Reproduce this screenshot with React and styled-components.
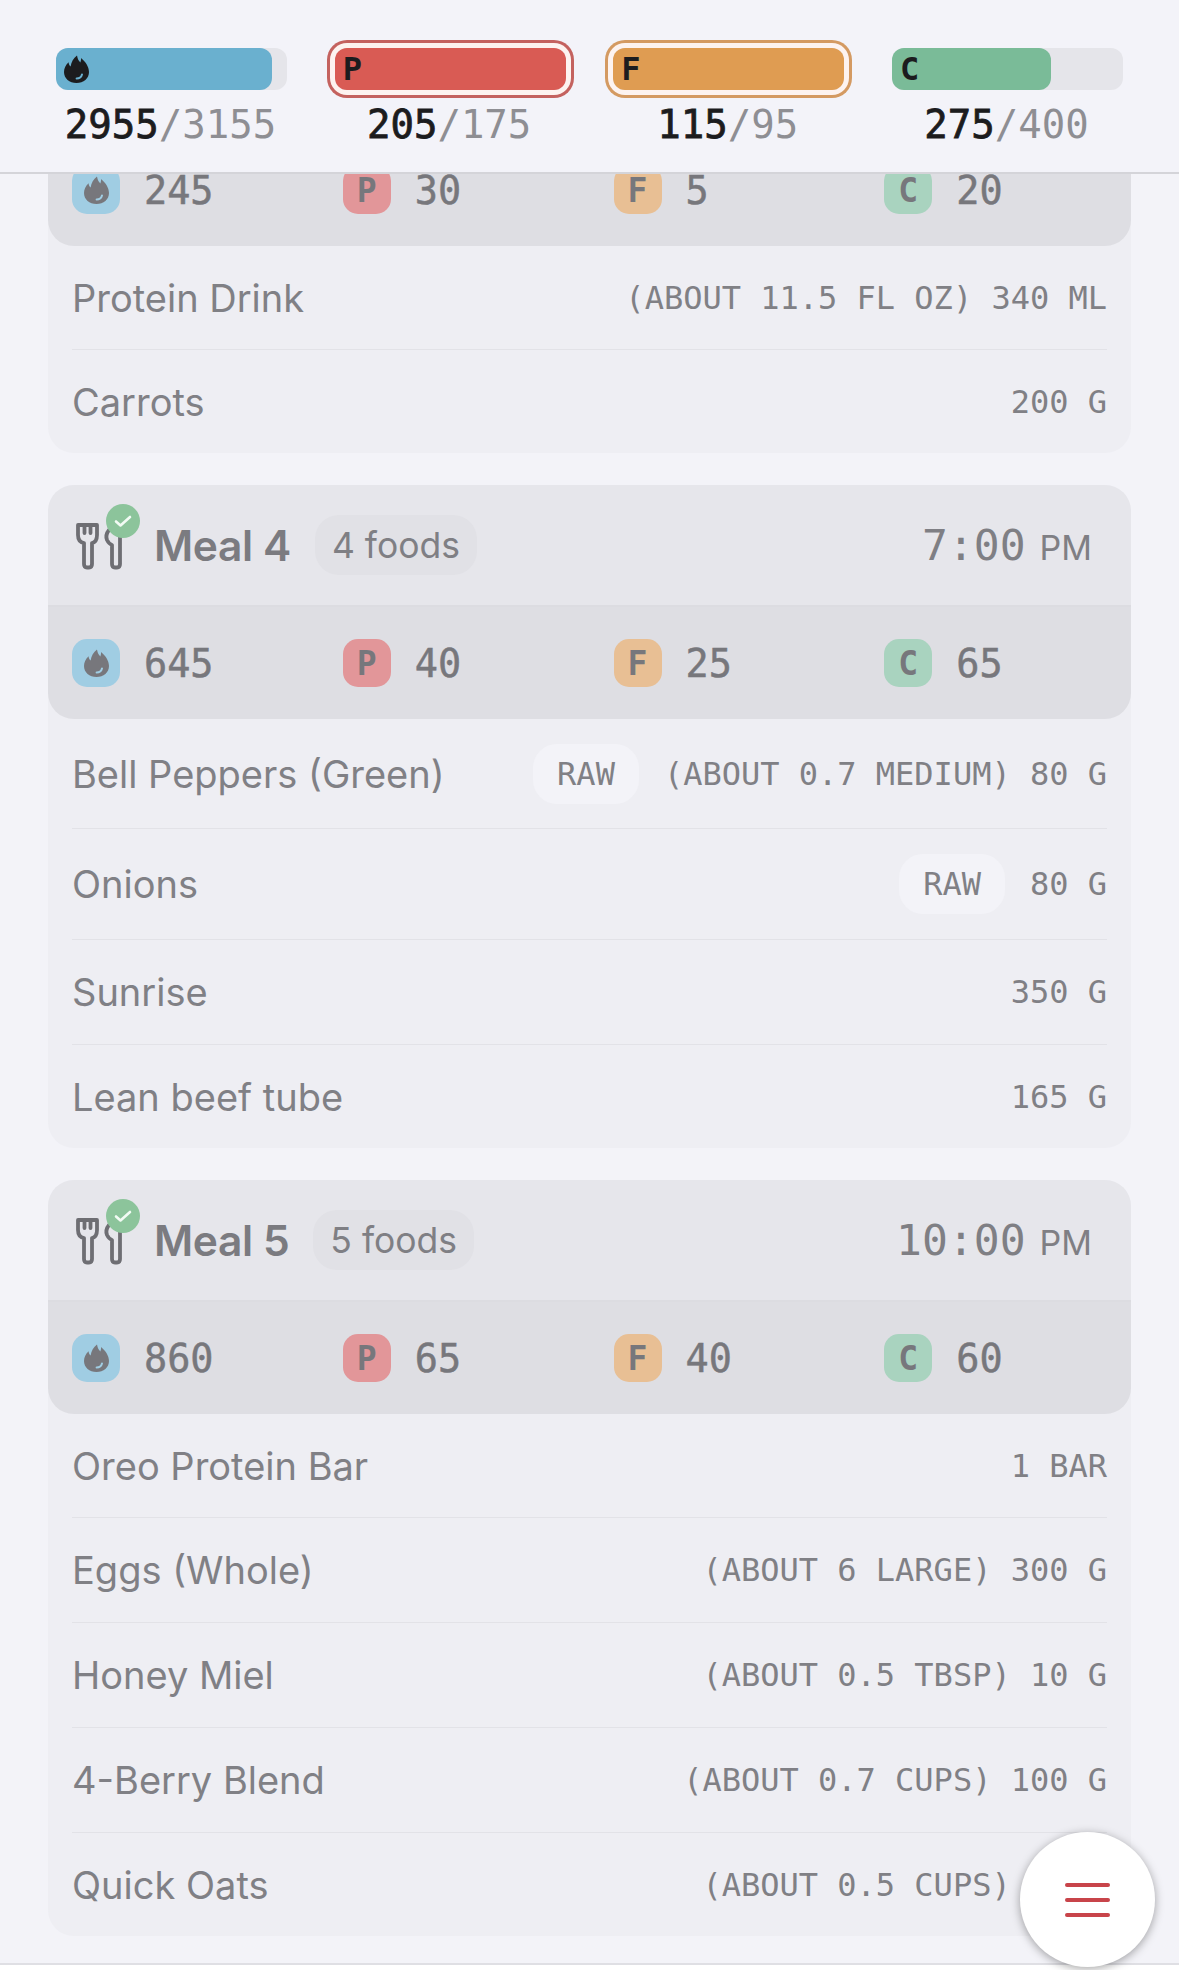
import styled, { createGlobalStyle } from 'styled-components'

const mono = `"DejaVu Sans Mono", "Liberation Mono", monospace`
const sans = `Inter, "Noto Sans", sans-serif`

const GlobalStyle = createGlobalStyle`
html, body {
  margin: 0;
  padding: 0;
  background: #fff;
}
* {
  box-sizing: border-box;
}
`

const Page = styled.div`
position: relative;
width: 1179px;
height: 1970px;
display: flex;
flex-direction: column;
overflow: hidden;
background: #fff;
`
const TopBar = styled.header`
height: 174px;
flex: none;
padding: 48px 56px 0;
display: grid;
grid-template-columns: repeat(4, 231px);
justify-content: space-between;
background: #f3f3f9;
border-bottom: 2px solid #d4d4d9;
`
const Macro = styled.div`
display: flex;
flex-direction: column;
align-items: center;
`
const Track = styled.div`
width: 100%;
height: 42px;
border-radius: 12px;
background: #e5e5ea;
box-shadow: ${(p) => (p.$over ? `0 0 0 5px #fdf3f0, 0 0 0 8px ${p.$ring}` : 'none')};
`
const Fill = styled.div`
height: 100%;
display: flex;
align-items: center;
padding-left: 8px;
border-radius: 12px;
background: ${(p) => p.$color};
color: #1c1c1e;
font: 700 32px ${mono};
`
const Totals = styled.div`
margin: 13px 2px 0 0;
font-family: ${mono};
font-size: 39px;
line-height: 44px;
color: #8e8e93;
white-space: nowrap;
`
const Eaten = styled.span`
color: #1c1c1e;
-webkit-text-stroke: 0.8px #1c1c1e;
`
const Scroller = styled.main`
flex: 1;
min-height: 0;
overflow: hidden;
padding: 0 48px;
background: #f3f3f8;
`
const Meals = styled.div`
margin-top: -40px;
display: flex;
flex-direction: column;
gap: 32px;
`
const Card = styled.section`
border-radius: 26px;
overflow: hidden;
background: #eeeef3;
`
const MealHeader = styled.div`
height: 122px;
display: flex;
align-items: center;
padding: 0 39px 0 28px;
background: #e6e6eb;
border-bottom: 2px solid #dcdce1;
`
const IconWrap = styled.div`
position: relative;
width: 51px;
height: 48px;
flex: none;
margin-top: 2px;
color: #6e6e73;
`
const Done = styled.div`
position: absolute;
top: -18px;
left: 30px;
width: 34px;
height: 34px;
display: flex;
align-items: center;
justify-content: center;
border-radius: 50%;
background: #8cc49b;
color: #f2fbf4;
`
const MealTitle = styled.h2`
margin: 0 0 0 27px;
font: 600 42.5px ${sans};
letter-spacing: -0.4px;
color: #7b7b80;
`
const FoodCount = styled.span`
margin-left: 24px;
height: 60px;
display: flex;
align-items: center;
padding: 0 17px;
border-radius: 24px;
background: #e1e1e6;
font: 400 35.5px ${sans};
color: #7f7f84;
`
const MealTime = styled.div`
margin-left: auto;
display: flex;
align-items: baseline;
gap: 14px;
font: 400 43px ${mono};
color: #7f7f84;
`
const Meridiem = styled.span`
font: 400 34px ${sans};
`
const StatsRow = styled.div`
height: 112px;
display: grid;
grid-template-columns: repeat(4, 1fr);
border-radius: 0 0 26px 26px;
background: #dedee3;
`
const Stat = styled.div`
display: flex;
align-items: center;
gap: 24px;
padding-left: 24px;
font-family: ${mono};
font-size: 38.5px;
color: #77777c;
-webkit-text-stroke: 0.5px #77777c;
`
const StatBadge = styled.span`
width: 48px;
height: 48px;
display: flex;
align-items: center;
justify-content: center;
border-radius: 15px;
background: ${(p) => p.$color};
font-weight: 700;
font-size: 33px;
-webkit-text-stroke: 0;
`
const Row = styled.div`
min-height: ${(p) => (p.$last ? 103 : p.$first ? 104 : 105)}px;
margin: 0 24px;
padding: ${(p) => (p.$first ? 24.5 : 25)}px 0;
display: flex;
align-items: center;
border-bottom: ${(p) => (p.$last ? 'none' : '1px solid #e2e2e7')};
`
const FoodName = styled.span`
margin-right: auto;
font: 400 38px ${sans};
color: #808085;
white-space: nowrap;
`
const Prep = styled.span`
height: 60px;
margin-right: 25px;
display: flex;
align-items: center;
padding: 0 24px;
border-radius: 24px;
background: #f3f3f8;
font: 400 32px ${mono};
color: #808085;
`
const Amount = styled.span`
font: 400 32px ${mono};
color: #808085;
white-space: pre;
`
const Fab = styled.button`
position: absolute;
left: 1020px;
top: 1832px;
width: 135px;
height: 135px;
display: flex;
flex-direction: column;
align-items: center;
justify-content: center;
gap: 11px;
padding: 0;
border: none;
border-radius: 50%;
background: #fff;
box-shadow: 0 2px 10px rgba(0, 0, 0, 0.35);
`
const FabBar = styled.span`
width: 45px;
height: 4px;
border-radius: 2px;
background: #c8444a;
`
const BottomEdge = styled.div`
height: 7px;
flex: none;
background: #fff;
border-top: 2px solid #dfdfe4;
`

const Flame = ({ size, color, shine }) => (
  <svg width={size} height={size * 1.12} viewBox="0 0 25 28" fill="none">
    <path
      d="M13 0.5C13.6 4.4 15 6.2 16.4 7.4C17 5.4 17.2 4.4 17 3C21.4 6.6 25 11.6 25 17C25 23.4 19.6 28 12.5 28C5.4 28 0 23.4 0 17C0 13.2 1.8 9.8 4.6 7.2C4.8 9.2 5.4 10.6 6.6 11.6C7.4 7.2 9.4 3 13 0.5Z"
      fill={color}
    />
    <path d="M12.6 23.4C15.4 23.4 17.4 21.8 18 19.4" stroke={shine} strokeWidth="2" strokeLinecap="round" />
  </svg>
)

const MealIcon = () => (
  <IconWrap>
    <svg width="51" height="48" viewBox="0 0 51 48" fill="none" stroke="currentColor" strokeWidth="3.8" strokeLinejoin="round" strokeLinecap="round">
      <path d="M2 3H21V13Q21 20 16 21V42Q16 45.500 13 45.500H11Q8 45.500 8 42V21Q2 20 2 13Z" />
      <path d="M8.500 3V11M14.500 3V11" />
      <path d="M33 8Q29 13 31 18Q33 22 36 23V42Q36 45.500 39 45.500H41Q44 45.500 44 42V10" />
    </svg>
    <Done>
      <svg width="18" height="14" viewBox="0 0 18 14" fill="none" stroke="currentColor" strokeWidth="2.600" strokeLinecap="round" strokeLinejoin="round">
        <path d="M2 7.500L6.500 11.500L16 3" />
      </svg>
    </Done>
  </IconWrap>
)

const goals = [
  { key: 'cal', color: '#6ab0cf', ring: '#6ab0cf', width: '93.500%', eaten: 2955, goal: 3155 },
  { key: 'P', color: '#d95b54', ring: '#c4625f', width: '100%', over: true, eaten: 205, goal: 175 },
  { key: 'F', color: '#df9c52', ring: '#d49a62', width: '100%', over: true, eaten: 115, goal: 95 },
  { key: 'C', color: '#7abb98', ring: '#7abb98', width: '68.800%', eaten: 275, goal: 400 },
]

const badgeColors = { cal: '#a0cde3', P: '#e29699', F: '#e8bf94', C: '#a9d3bf' }

const meals = [
  {
    stats: [245, 30, 5, 20],
    foods: [
      { name: 'Protein Drink', amount: '(ABOUT 11.5 FL OZ) 340 ML' },
      { name: 'Carrots', amount: '200 G' },
    ],
  },
  {
    title: 'Meal 4',
    count: '4 foods',
    time: '7:00',
    stats: [645, 40, 25, 65],
    foods: [
      { name: 'Bell Peppers (Green)', prep: 'RAW', amount: '(ABOUT 0.7 MEDIUM) 80 G' },
      { name: 'Onions', prep: 'RAW', amount: '80 G' },
      { name: 'Sunrise', amount: '350 G' },
      { name: 'Lean beef tube', amount: '165 G' },
    ],
  },
  {
    title: 'Meal 5',
    count: '5 foods',
    time: '10:00',
    stats: [860, 65, 40, 60],
    foods: [
      { name: 'Oreo Protein Bar', amount: '1 BAR' },
      { name: 'Eggs (Whole)', amount: '(ABOUT 6 LARGE) 300 G' },
      { name: 'Honey Miel', amount: '(ABOUT 0.5 TBSP) 10 G' },
      { name: '4-Berry Blend', amount: '(ABOUT 0.7 CUPS) 100 G' },
      { name: 'Quick Oats', amount: '(ABOUT 0.5 CUPS) 50 G' },
    ],
  },
]

const App = () => {
  return (
    <Page>
      <GlobalStyle />
      <TopBar>
        {goals.map((g) => (
          <Macro key={g.key}>
            <Track $over={g.over} $ring={g.ring}>
              <Fill $color={g.color} style={{ width: g.width }}>
                {g.key === 'cal' ? <Flame size={25} color="#1c1c1e" shine="#6ab0cf" /> : g.key}
              </Fill>
            </Track>
            <Totals>
              <Eaten>{g.eaten}</Eaten>/{g.goal}
            </Totals>
          </Macro>
        ))}
      </TopBar>
      <Scroller>
        <Meals>
          {meals.map((meal, i) => (
            <Card key={i}>
              {meal.title && (
                <MealHeader>
                  <MealIcon />
                  <MealTitle>{meal.title}</MealTitle>
                  <FoodCount>{meal.count}</FoodCount>
                  <MealTime>
                    {meal.time}
                    <Meridiem>PM</Meridiem>
                  </MealTime>
                </MealHeader>
              )}
              <StatsRow>
                {['cal', 'P', 'F', 'C'].map((key, j) => (
                  <Stat key={key}>
                    <StatBadge $color={badgeColors[key]}>
                      {key === 'cal' ? <Flame size={25} color="#77777c" shine="#a0cde3" /> : key}
                    </StatBadge>
                    {meal.stats[j]}
                  </Stat>
                ))}
              </StatsRow>
              {meal.foods.map((food, j) => (
                <Row key={food.name} $first={j === 0} $last={j === meal.foods.length - 1}>
                  <FoodName>{food.name}</FoodName>
                  {food.prep && <Prep>{food.prep}</Prep>}
                  <Amount>{food.amount}</Amount>
                </Row>
              ))}
            </Card>
          ))}
        </Meals>
      </Scroller>
      <BottomEdge />
      <Fab aria-label="Menu">
        <FabBar />
        <FabBar />
        <FabBar />
      </Fab>
    </Page>
  )
}

export default App
